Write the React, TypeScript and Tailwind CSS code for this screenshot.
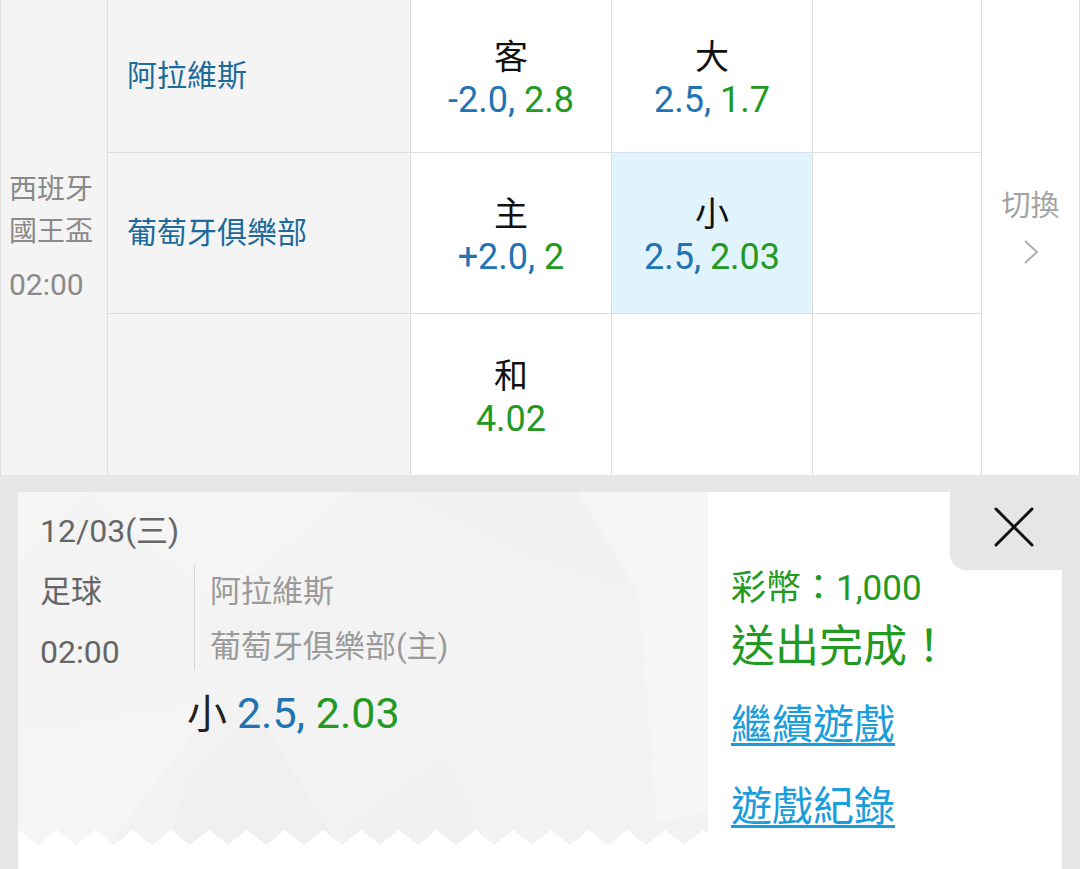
import React from "react";

const B = "text-[#1f74b1]";
const G = "text-[#229a22]";

function OddsCell({ label, a, b, hl }: { label: string; a?: string; b: string; hl?: boolean }) {
  return (
    <div
      className={`flex flex-col items-center justify-center pt-[6px] border-r border-b border-r-[#dcdcdc] border-b-[#d6e0e7] ${
        hl ? "bg-[#e1f3fd] border-r-[#c9dce8] border-b-[#c9dce8]" : "bg-white"
      }`}
    >
      <div className="text-[34px] leading-[43px] text-[#111]">{label}</div>
      <div className="text-[36px] leading-[43px] whitespace-pre">
        {a ? <span className={B}>{a}, </span> : null}
        <span className={G}>{b}</span>
      </div>
    </div>
  );
}

function Empty({ gray, noBottom }: { gray?: boolean; noBottom?: boolean }) {
  return (
    <div
      className={`border-r border-r-[#dcdcdc] ${noBottom ? "" : "border-b border-b-[#d6e0e7]"} ${
        gray ? "bg-[#f4f4f4]" : "bg-white"
      }`}
    />
  );
}

function Team({ name }: { name: string }) {
  return (
    <div className="flex items-center pl-[19px] pb-[2px] bg-[#f4f4f4] border-r border-b border-r-[#dcdcdc] border-b-[#d6e0e7] text-[30px] text-[#1d6a9b]">
      {name}
    </div>
  );
}

function Table() {
  return (
    <div className="grid grid-cols-[108px_303px_201px_201px_169px_98px] grid-rows-[153px_161px_161px] bg-white">
      <div className="row-span-3 flex flex-col justify-center pl-[8px] bg-[#f4f4f4] border-l border-r border-[#dcdcdc] text-[28px] text-[#8a8a8a]">
        <div className="leading-[42px]">西班牙</div>
        <div className="leading-[42px]">國王盃</div>
        <div className="leading-[42px] mt-[11px] text-[30px]">02:00</div>
      </div>
      <Team name="阿拉維斯" />
      <OddsCell label="客" a="-2.0" b="2.8" />
      <OddsCell label="大" a="2.5" b="1.7" />
      <Empty />
      <div className="row-span-3 flex flex-col items-center justify-center pb-[24px] bg-white border-r border-[#dcdcdc] text-[#a3a3a3]">
        <div className="text-[29px] leading-[40px]">切換</div>
        <svg width="16" height="26" viewBox="0 0 16 26" className="mt-[13px]">
          <polyline points="2,2 14,13 2,24" fill="none" stroke="#b0b0b0" strokeWidth="2" />
        </svg>
      </div>
      <Team name="葡萄牙俱樂部" />
      <OddsCell label="主" a="+2.0" b="2" />
      <OddsCell label="小" a="2.5" b="2.03" hl />
      <Empty />
      <Empty gray noBottom />
      <div className="flex flex-col items-center justify-center pt-[6px] bg-white border-r border-r-[#dcdcdc]">
        <div className="text-[34px] leading-[43px] text-[#111]">和</div>
        <div className={`text-[36px] leading-[43px] ${G}`}>4.02</div>
      </div>
      <Empty noBottom />
      <Empty noBottom />
    </div>
  );
}

function TicketBg() {
  const teeth: string[] = [];
  for (let k = 0; k < 20; k++) {
    const x = 1 + 38 * k;
    teeth.push(`M${x - 19},353 L${x},338 L${x + 19},353 Z`);
  }
  return (
    <svg className="absolute inset-0" width="690" height="353" viewBox="0 0 690 353">
      <rect x="0" y="0" width="690" height="353" fill="#f3f3f3" />
      <polygon points="0,0 70,0 0,70" fill="#f6f6f6" />
      <polygon points="70,0 330,0 200,110" fill="#f5f5f5" />
      <polygon points="0,240 200,210 90,353 0,353" fill="#f5f5f5" />
      <polygon points="200,210 330,330 90,353" fill="#f2f2f2" />
      <polygon points="170,290 240,220 320,353 150,353" fill="#f0f0f0" />
      <polygon points="380,0 560,0 620,100 520,70" fill="#f1f1f1" />
      <polygon points="560,0 690,0 690,60 620,100" fill="#f5f5f5" />
      <polygon points="430,260 510,130 620,240" fill="#f2f2f2" />
      <polygon points="330,330 430,260 470,353 320,353" fill="#f1f1f1" />
      <polygon points="620,100 690,60 690,320 640,330" fill="#f6f6f6" />
      <polygon points="470,353 620,240 640,330 690,320 690,353" fill="#f2f2f2" />
      <polygon points="0,110 150,90 60,240 0,240" fill="#f4f4f4" />
      <path d={teeth.join(" ")} fill="#ffffff" />
    </svg>
  );
}

function Result() {
  return (
    <div className="pt-[17px] px-[18px] h-[394px]">
      <div className="flex h-[377px] bg-white">
        <div className="relative w-[690px] h-[353px] shrink-0">
          <TicketBg />
          <div className="relative pl-[22px] pt-[20px]">
            <div className="text-[32px] leading-[38px] text-[#666]">12/03(三)</div>
            <div className="flex mt-[12px]">
              <div className="w-[154px] text-[32px] text-[#666]">
                <div className="leading-[60px] text-[31px]">足球</div>
                <div className="leading-[60px]">02:00</div>
              </div>
              <div className="w-px h-[105px] mt-[3px] bg-[#d6d6d6]" />
              <div className="pl-[15px] pt-[2px] text-[31px] text-[#9a9a9a]">
                <div className="leading-[55px]">阿拉維斯</div>
                <div className="leading-[55px]">葡萄牙俱樂部(主)</div>
              </div>
            </div>
            <div className="mt-[6px] ml-[147px] leading-[50px] whitespace-pre">
              <span className="text-[40px] text-[#222]">小 </span>
              <span className={`text-[43px] ${B}`}>2.5, </span>
              <span className={`text-[43px] ${G}`}>2.03</span>
            </div>
          </div>
        </div>
        <div className="relative flex-1 pl-[23px] pt-[76px]">
          <div className="absolute top-0 right-0 w-[112px] h-[78px] bg-[#e6e6e6] rounded-bl-[16px] flex items-center justify-center pl-[16px] pb-[9px]">
            <svg width="40" height="40" viewBox="0 0 40 40">
              <line x1="2" y1="2" x2="38" y2="38" stroke="#111" strokeWidth="3" strokeLinecap="round" />
              <line x1="38" y1="2" x2="2" y2="38" stroke="#111" strokeWidth="3" strokeLinecap="round" />
            </svg>
          </div>
          <div className={`text-[35px] leading-[42px] ${G}`}>彩幣：1,000</div>
          <div className={`mt-[9px] text-[44px] leading-[56px] ${G}`}>送出完成！</div>
          <div className="mt-[25px] text-[41px] leading-[50px] text-[#1a9ddc] underline decoration-[3px] underline-offset-[4px]">
            繼續遊戲
          </div>
          <div className="mt-[32px] text-[41px] leading-[50px] text-[#1a9ddc] underline decoration-[3px] underline-offset-[4px]">
            遊戲紀錄
          </div>
        </div>
      </div>
    </div>
  );
}

export default function App() {
  return (
    <div className="w-[1080px] h-[869px] overflow-hidden bg-[#e6e6e6] font-[Roboto,'Noto_Sans_CJK_TC',sans-serif]">
      <Table />
      <Result />
    </div>
  );
}
